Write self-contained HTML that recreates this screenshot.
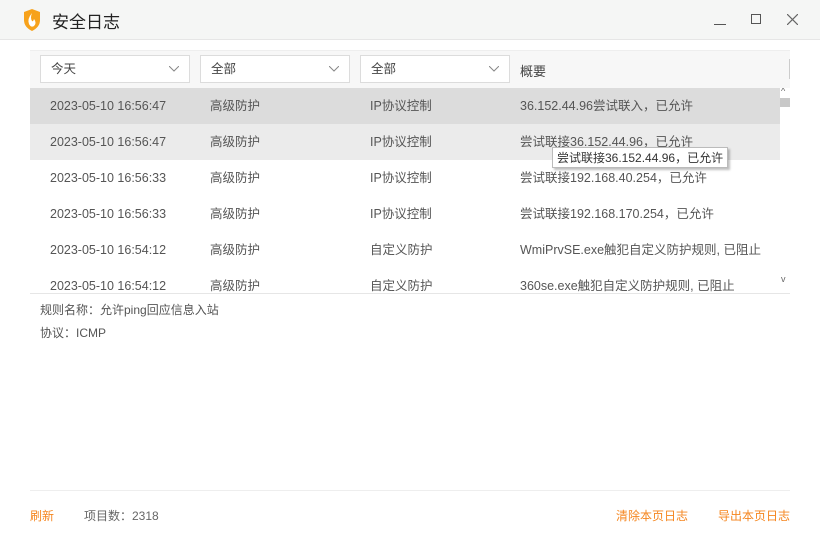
<!DOCTYPE html>
<html><head><meta charset="utf-8"><style>
*{margin:0;padding:0;box-sizing:border-box}
body{width:820px;height:540px;background:#fff;font-family:"Liberation Sans","Noto Sans CJK SC",sans-serif;font-size:12px;color:#555;position:relative;overflow:hidden}
.abs{position:absolute}
.title{left:0;top:0;width:820px;height:40px;background:#f5f6f5;border-bottom:1px solid #e6e6e6}
.hdr{left:30px;top:50px;width:760px;height:38px;background:#f7f7f7;border-top:1px solid #eee}
.dd{top:55px;width:150px;height:28px;border:1px solid #dcdcdc;background:#fff;padding-left:10px;line-height:26px;color:#444;font-size:12.5px}
.dd svg{position:absolute;right:10px;top:10px}
.row{left:30px;width:750px;height:36px;line-height:36px;white-space:nowrap;font-size:12.5px;color:#555}
.row span{position:absolute}
</style></head><body>
<div class="abs title"></div>
<svg class="abs" style="left:22px;top:9px" width="20" height="22" viewBox="0 0 20 22"><path d="M2 3 L10 0 L18 3 L18 11 Q18 18 10 22 Q2 18 2 11Z" fill="#f7a21b"/><path d="M10 4 Q5 10 7 15 Q9 19 12 17 Q15 14 12 10 Q11 13 10 12 Q8 9 10 4Z" fill="#fff"/></svg>
<div class="abs" style="left:52px;top:8px;font-size:17px;color:#222">安全日志</div>
<div class="abs" style="left:714px;top:24px;width:12px;height:1px;background:#555"></div>
<div class="abs" style="left:751px;top:14px;width:10px;height:10px;border:1px solid #555"></div>
<svg class="abs" style="left:787px;top:14px" width="11" height="11"><path d="M0 0L11 11M11 0L0 11" stroke="#666" stroke-width="1.2"/></svg>
<div class="abs hdr"></div>
<div class="abs dd" style="left:40px">今天<svg width="10" height="6"><path d="M0 0L5 5L10 0" stroke="#888" fill="none"/></svg></div>
<div class="abs dd" style="left:200px">全部<svg width="10" height="6"><path d="M0 0L5 5L10 0" stroke="#888" fill="none"/></svg></div>
<div class="abs dd" style="left:360px">全部<svg width="10" height="6"><path d="M0 0L5 5L10 0" stroke="#888" fill="none"/></svg></div>
<div class="abs" style="left:520px;top:61px;color:#444;font-size:13px">概要</div>
<div class="abs" style="left:789px;top:59px;width:1px;height:20px;background:#ccc"></div>
<div class="abs" style="left:30px;top:88px;width:760px;height:205px;overflow:hidden">
<div class="abs row" style="left:0;top:0;background:#dcdcdc"><span style="left:20px">2023-05-10 16:56:47</span><span style="left:180px">高级防护</span><span style="left:340px">IP协议控制</span><span style="left:490px">36.152.44.96尝试联入，已允许</span></div>
<div class="abs row" style="left:0;top:36px;background:#ebebeb"><span style="left:20px">2023-05-10 16:56:47</span><span style="left:180px">高级防护</span><span style="left:340px">IP协议控制</span><span style="left:490px">尝试联接36.152.44.96，已允许</span></div>
<div class="abs row" style="left:0;top:72px"><span style="left:20px">2023-05-10 16:56:33</span><span style="left:180px">高级防护</span><span style="left:340px">IP协议控制</span><span style="left:490px">尝试联接192.168.40.254，已允许</span></div>
<div class="abs row" style="left:0;top:108px"><span style="left:20px">2023-05-10 16:56:33</span><span style="left:180px">高级防护</span><span style="left:340px">IP协议控制</span><span style="left:490px">尝试联接192.168.170.254，已允许</span></div>
<div class="abs row" style="left:0;top:144px"><span style="left:20px">2023-05-10 16:54:12</span><span style="left:180px">高级防护</span><span style="left:340px">自定义防护</span><span style="left:490px">WmiPrvSE.exe触犯自定义防护规则, 已阻止</span></div>
<div class="abs row" style="left:0;top:180px"><span style="left:20px">2023-05-10 16:54:12</span><span style="left:180px">高级防护</span><span style="left:340px">自定义防护</span><span style="left:490px">360se.exe触犯自定义防护规则, 已阻止</span></div>
<div class="abs" style="left:750px;top:0;width:10px;height:205px;background:#fff"></div>
<div class="abs" style="left:750px;top:10px;width:10px;height:9px;background:#c8c8c8"></div>
<div class="abs" style="left:751px;top:-2px;font-size:9px;color:#666">^</div>
<div class="abs" style="left:751px;top:186px;font-size:9px;color:#666">v</div>
</div>
<div class="abs" style="left:30px;top:293px;width:760px;height:1px;background:#e6e6e6"></div>
<div class="abs" style="left:552px;top:147px;height:21px;padding:0 4px;line-height:20px;background:#fff;border:1px solid #bbb;box-shadow:2px 2px 2px rgba(0,0,0,.25);color:#333;font-size:12px">尝试联接36.152.44.96，已允许</div>
<div class="abs" style="left:40px;top:301px;font-size:12px">规则名称：允许ping回应信息入站</div>
<div class="abs" style="left:40px;top:324px;font-size:12px">协议：ICMP</div>
<div class="abs" style="left:30px;top:490px;width:760px;height:1px;background:#eee"></div>
<div class="abs" style="left:30px;top:507px;color:#f5861f">刷新</div>
<div class="abs" style="left:84px;top:507px;color:#666">项目数：2318</div>
<div class="abs" style="left:616px;top:507px;color:#f5861f">清除本页日志</div>
<div class="abs" style="left:718px;top:507px;color:#f5861f">导出本页日志</div>
</body></html>
